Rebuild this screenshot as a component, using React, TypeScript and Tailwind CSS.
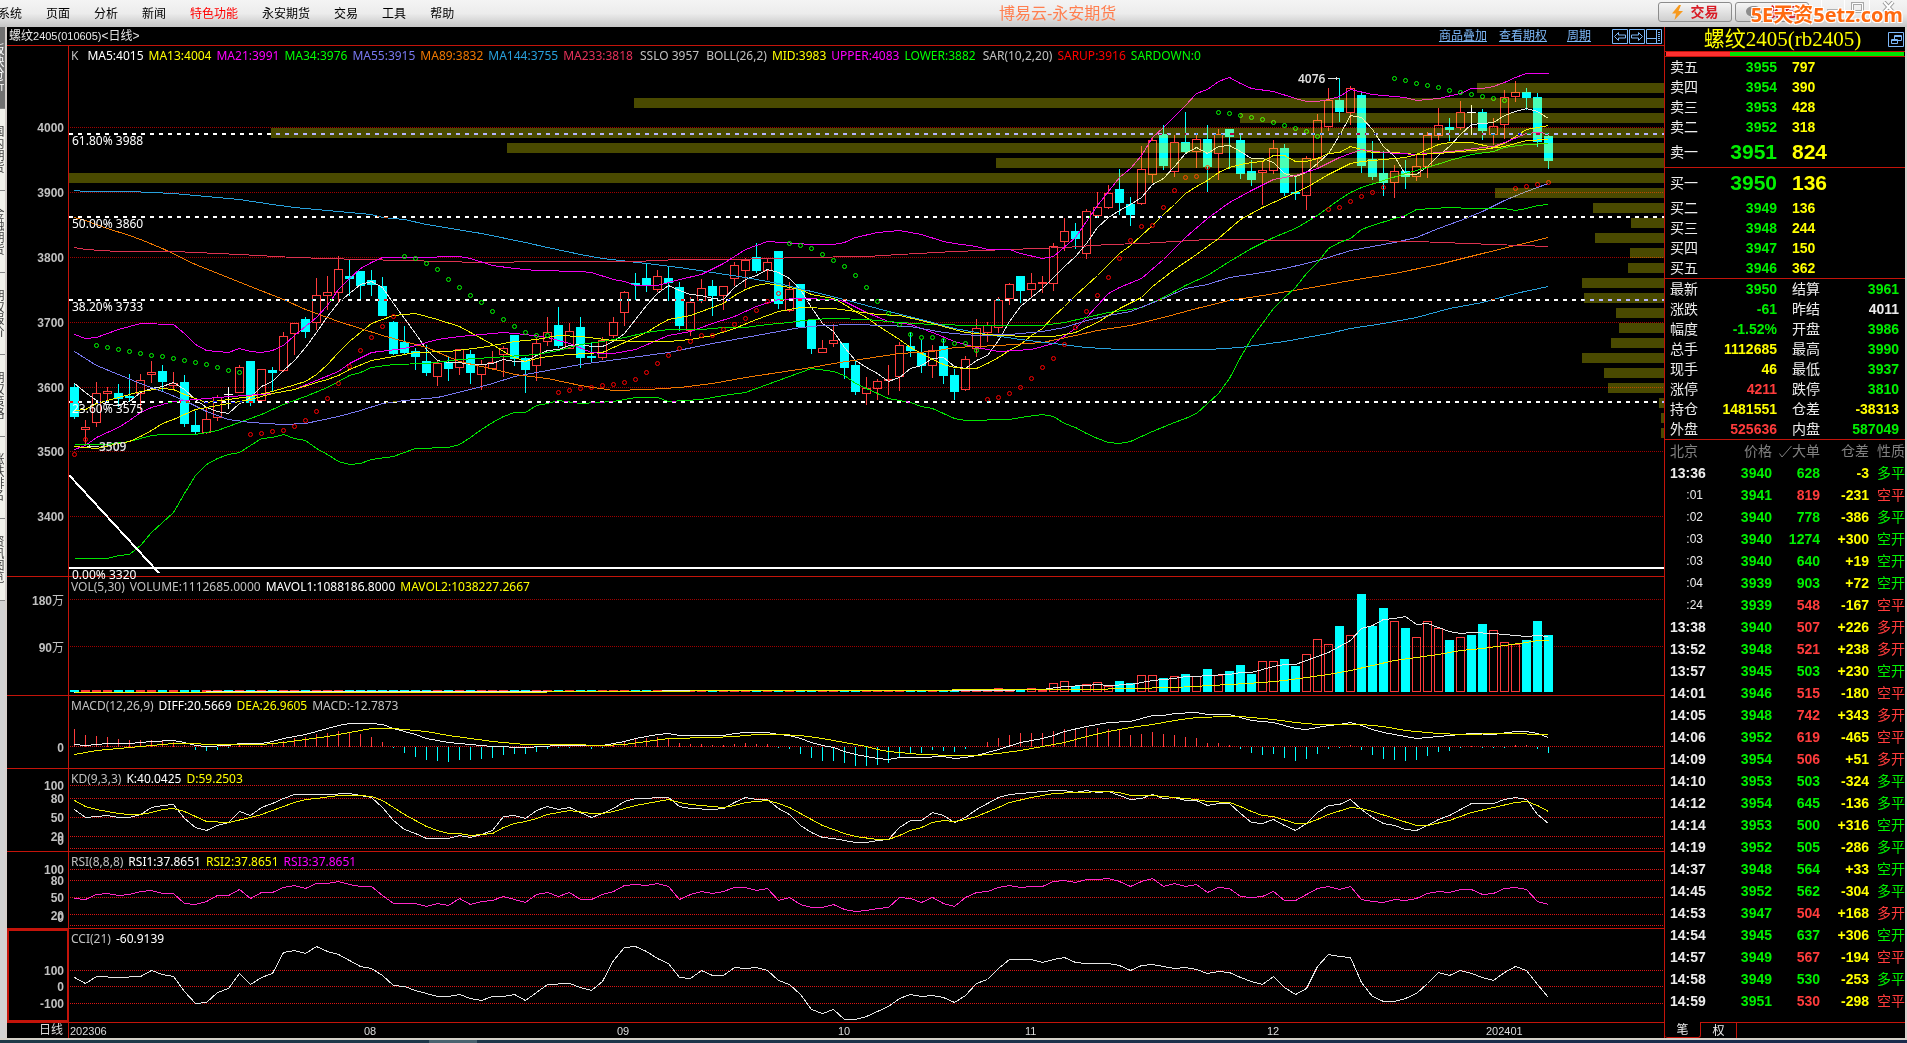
import React from "react";

const CJK = "font-['Liberation_Sans','Noto_Sans_CJK_SC',sans-serif]";
const LABEL = "font-['Noto_Sans','Noto_Sans_CJK_SC',sans-serif]";

const STEP = 11;
const FIRST = 5.5;
const PLOT_WIDTH = 1595;
const RED = "#ff3c3c";
const CYAN = "#00ffff";

const xOf = (i: number) => FIRST + STEP * i;

/* Series are written as "bar:y" pairs, y in chart units. */
const parse = (s: string): [number, number][] =>
  s
    .trim()
    .split(/\s+/)
    .map((p) => p.split(":").map(Number) as [number, number]);

const toPoints = (s: string) =>
  parse(s)
    .map(([i, y]) => `${xOf(i)},${y + 0.5}`)
    .join(" ");

function Line({ data, color, width = 1 }: { data: string; color: string; width?: number }) {
  return <polyline points={toPoints(data)} fill="none" stroke={color} strokeWidth={width} />;
}

/* One candle per entry: kind, high, top, bottom, low. */
const candles = `
d,384,387,417,419 u,420,427,430,446 u,382,393,423,427 u,387,391,394,402 d,384,393,399,407 d,374,396,397,402
u,374,380,394,410 u,361,372,375,383 d,365,371,382,391 u,372,383,386,390 d,375,382,424,427 d,411,425,432,434
u,407,419,433,434 u,395,397,418,421 x,387,394,395,409 u,365,367,393,393 d,361,361,403,406 u,369,369,401,401
d,367,370,373,391 u,332,336,371,372 u,323,323,334,355 d,317,319,332,338 u,278,295,323,330 u,276,292,296,310
u,256,269,293,302 d,260,276,279,296 d,271,271,286,299 d,270,280,285,296 d,277,286,316,316 d,321,322,354,355
d,326,342,353,354 d,348,351,357,370 d,345,361,373,376 u,360,363,377,386 d,356,362,369,381 u,349,349,368,375
d,350,354,373,384 u,360,364,375,390 u,351,362,369,369 u,346,348,355,377 d,335,335,359,366 d,357,358,370,393
u,337,343,366,381 u,317,332,342,346 d,307,325,346,348 u,323,331,349,349 d,317,327,358,368 d,342,356,358,363
u,337,340,358,360 u,317,322,336,338 u,291,292,313,326 d,273,283,285,300 d,263,278,285,292 u,270,276,290,292
d,267,278,283,301 d,282,287,326,331 u,297,302,331,336 u,279,288,301,303 d,280,286,296,316 u,286,286,296,310
u,262,265,279,286 u,258,260,271,288 d,243,257,271,273 u,259,262,271,280 d,251,251,304,309 u,282,289,311,312
d,284,284,327,328 d,319,320,349,354 u,340,348,353,353 u,324,340,344,347 d,343,343,368,379 d,360,365,392,395
u,377,388,394,405 u,379,381,389,400 u,365,379,381,395 u,342,345,377,391 d,332,346,351,357 d,340,353,366,373
u,345,350,366,378 d,339,346,376,384 d,369,375,392,400 u,356,359,390,391 u,319,328,349,357 u,322,325,333,342
u,297,300,328,333 u,283,284,299,305 d,276,276,291,303 u,273,283,290,298 u,276,282,284,293 u,243,246,284,291
u,218,231,242,251 d,223,231,239,249 u,209,211,254,259 u,192,207,216,218 u,185,193,208,209 d,169,189,203,215
d,197,204,215,226 u,146,169,204,205 u,137,140,175,183 d,125,134,166,170 u,135,142,172,177 d,112,142,152,153
u,133,139,152,168 d,125,139,167,192 u,129,134,154,180 d,129,129,137,169 d,135,140,174,179 d,160,171,180,186
u,162,170,173,205 u,140,148,171,174 d,144,148,193,196 d,177,192,194,200 u,156,158,196,210 u,114,120,159,167
u,88,100,127,131 d,78,100,112,122 u,86,88,113,125 d,92,95,166,173 d,141,159,177,180 d,151,173,183,196
u,165,171,183,198 d,160,171,177,189 u,154,166,177,181 u,132,135,167,178 u,108,125,136,140 d,118,127,130,141
u,101,112,128,130 x,105,112,113,135 d,109,112,131,140 u,118,126,135,145 u,90,97,125,139 u,81,92,97,102
d,88,92,98,110 d,93,97,142,147 d,134,136,161,169`
  .trim()
  .split(/\s+/)
  .map((c) => {
    const [kind, ...v] = c.split(",");
    const [high, top, bottom, low] = v.map(Number);
    return { kind, high, top, bottom, low };
  });

const ma5 =
  "0:383 1:392 2:400 3:404 4:405 5:401 6:392 7:388 8:386 9:382 10:389 11:399 12:407 13:411 14:413 15:403 16:397 17:386 18:381 19:370 20:360 21:347 22:332 23:316 24:302 25:293 26:284 27:281 28:287 29:303 30:318 31:333 32:349 33:360 34:362 35:362 36:364 37:364 38:363 39:359 40:361 41:361 42:355 43:350 44:349 45:345 46:344 47:346 48:346 49:341 50:333 51:319 52:305 53:293 54:285 55:290 56:294 57:295 58:298 59:299 60:287 61:279 62:275 63:269 64:272 65:278 66:289 67:307 68:323 69:331 70:347 71:360 72:367 73:373 74:381 75:377 76:368 77:365 78:358 79:357 80:366 81:368 82:360 83:355 84:340 85:321 86:306 87:297 88:288 89:277 90:266 91:256 92:243 93:227 94:217 95:210 96:204 97:197 98:184 99:178 100:166 101:153 102:147 103:153 104:146 105:145 106:151 107:158 108:158 109:162 110:173 111:176 112:172 113:163 114:153 115:135 116:115 117:117 118:129 119:146 120:156 121:174 122:174 123:166 124:155 125:146 126:134 127:124 128:123 129:122 130:115 131:111 132:108 133:111 134:118";
const ma13 =
  "0:410 1:409 2:403 4:397 6:391 8:388 9:389 10:394 12:402 14:399 16:396 18:391 21:381 22:374 23:364 24:352 25:341 26:332 27:323 29:315 31:313 33:319 35:326 36:332 37:338 38:344 39:351 40:357 41:361 42:358 43:356 45:354 48:352 49:347 50:342 52:332 53:325 54:319 56:315 57:311 59:303 60:295 61:289 62:285 63:283 64:285 66:289 67:294 69:298 70:304 71:311 72:317 73:325 74:332 75:339 76:347 78:359 79:364 80:367 81:368 82:368 83:363 84:357 85:350 86:344 87:335 88:328 89:316 90:306 91:295 92:285 93:275 94:264 95:253 96:245 97:235 98:225 99:214 100:204 101:193 102:186 103:180 104:172 105:167 106:164 107:162 108:161 109:155 110:155 111:161 112:161 113:158 114:153 115:152 116:146 117:149 118:152 120:152 122:154 123:149 124:144 125:142 126:142 127:142 129:147 130:143 131:136 132:129 133:127 134:125";
const ma21 =
  "0:449 1:445 2:437 4:427 5:420 6:412 7:407 9:401 13:397 18:393 20:389 22:380 24:371 25:363 27:352 30:348 33:339 35:336 38:333 39:332 41:334 43:337 45:343 47:352 48:353 49:353 51:349 54:335 56:331 58:323 60:316 62:306 64:299 66:298 69:299 70:301 72:312 74:321 76:324 78:332 80:341 82:347 84:351 87:349 89:343 91:328 92:317 94:293 95:287 97:278 99:259 101:237 103:218 105:202 107:190 109:179 111:175 113:168 115:157 117:149 119:152 122:154 126:150 128:147 129:146 130:142 132:133 133:132 134:133";
const ma34 =
  "0:444 3:444 5:441 7:435 8:434 11:434 13:430 15:422 17:414 19:404 21:396 23:387 25:375 26:372 27:367 29:364 32:363 35:359 38:357 42:354 44:350 46:344 48:341 50:337 52:332 54:329 57:329 59:327 61:327 63:324 65:322 67:319 69:318 72:319 75:322 78:324 82:325 88:325 90:322 92:317 94:312 96:309 97:307 99:297 101:285 103:275 105:261 107:248 109:237 111:228 113:215 115:199 116:192 117:187 119:180 121:173 123:167 125:160 127:154 129:151 130:147 132:144 134:143";
const ma55 =
  "0:351 2:365 4:374 6:383 8:391 10:400 12:411 14:419 16:422 19:424 21:423 24:416 26:410 28:403 30:400 33:397 36:389 38:383 40:376 43:370 46:364 50:358 54:352 58:343 62:335 66:327 68:325 71:324 76:326 79:332 82:335 85:334 88:331 90:327 92:320 94:315 96:311 99:298 101:288 103:284 105:277 108:272 110:268 112:263 114:257 116:250 118:246 120:242 122:237 124:228 126:220 128:211 130:200 132:191 134:183";
const ma89 =
  "0:217 1:220 3:228 5:235 6:239 8:248 11:264 16:286 19:299 21:309 24:321 26:328 28:335 30:341 32:347 35:361 37:366 39:371 40:374 43:378 46:385 49:390 52:389 55:387 58:383 61:377 64:372 67:367 69:363 72:358 75:353 78:351 80:347 84:345 88:342 91:335 93:330 96:325 99:317 102:308 105:300 108:295 112:288 116:280 120:273 124:264 128:253 131:245 134:237";
const ma144 =
  "0:190 1:191 5:191 7:192 9:193 12:196 15:199 18:204 20:207 25:212 27:214 28:217 30:219 32:224 37:233 41:242 43:247 46:254 48:258 52:263 55:267 58:272 61:277 64:283 67:291 70:299 74:311 77:319 80:328 83:334 86:339 89:343 92:347 95:349 103:349 106:347 110:341 114:333 116:328 119:323 122:317 125:308 128:302 131:293 134:286";
const ma233 =
  "0:247 1:249 4:251 9:251 15:254 20:257 26:259 30:260 37:262 43:261 51:261 55:259 60:259 66:257 72:256 75:254 80:251 85:249 90:247 94:244 97:243 103:239 113:240 117:240 122:241 129:244 134:246";
const bollMid =
  "0:446 2:448 4:443 5:441 6:436 7:430 8:423 9:419 10:414 11:409 12:407 14:403 16:399 18:393 20:389 22:382 23:379 24:375 25:369 27:360 29:356 31:352 34:351 37:347 38:345 40:341 42:339 43:337 44:335 46:336 49:340 51:341 54:341 56:339 58:335 60:328 62:319 64:311 66:307 69:308 71:311 73:314 75:315 77:320 79:326 81:332 84:335 87:336 89:336 91:332 93:322 95:308 97:297 98:286 100:269 102:254 104:238 106:219 108:207 110:197 112:187 114:174 116:163 117:161 119:159 121:157 122:154 124:153 126:151 128:149 130:146 132:140 134:139";
const bollUpper =
  "0:334 1:338 2:337 4:329 6:323 9:324 10:333 11:344 12:350 14:352 15:348 16:351 17:352 18:350 19:345 20:335 21:326 22:317 23:305 24:289 25:278 26:268 27:262 28:257 32:257 34:256 35:256 36:258 38:265 40:268 42:270 46:271 47:272 49:279 50:281 51:285 53:285 55:279 57:274 59:263 61:249 63:241 67:244 69:244 70:242 71:237 73:232 75:230 77:234 79:241 80:243 82:246 83:249 85:249 86:253 88:258 89:256 91:237 92:221 93:205 94:191 95:177 96:168 97:155 98:137 99:127 101:105 102:93 103:89 104:81 105:77 106:83 107:88 109:91 111:98 112:101 113:101 114:99 115:96 116:89 118:94 121:97 122:100 124:98 126:93 127:88 128:88 129:86 130:82 131:77 132:73 134:73";
const bollLower =
  "0:558 3:558 4:555 5:554 6:545 7:532 8:522 9:512 10:493 11:475 12:464 13:458 14:454 15:452 16:445 17:438 18:437 19:434 20:438 21:440 22:448 23:454 24:461 25:464 26:463 27:459 29:456 31:448 34:447 35:444 36:437 37:429 38:422 39:416 40:412 41:412 42:405 43:403 44:400 46:403 49:401 51:397 53:397 54:401 57:399 59:395 61:392 63:384 65:376 67:368 69:371 70:375 71:383 73:393 74:398 76:402 77:406 78:408 79:413 80:418 81:420 85:419 86:417 88:414 89:416 90:423 91:427 92:433 93:438 94:442 95:443 96:441 98:431 100:422 101:418 102:413 103:403 104:393 105:378 106:357 107:338 108:323 109:308 110:297 111:287 112:273 113:262 114:248 115:242 116:238 117:229 118:225 120:218 121:215 122:209 125:207 127:208 130:208 131:210 132:208 133:205 134:204";

const sarDown =
  "2:345 3:347 4:349 5:351 6:353 7:355 8:356 9:358 10:360 11:362 12:364 13:367 14:370 15:372 30:256 31:258 32:263 33:269 34:279 35:287 36:295 37:302 38:311 39:319 40:326 41:332 42:335 43:335 65:243 66:245 67:248 68:254 69:260 70:266 71:275 72:287 73:301 74:313 75:324 76:334 77:337 78:337 79:340 80:343 81:343 82:350 104:112 105:113 106:115 107:117 108:119 109:122 110:125 111:128 112:131 113:136 120:78 121:80 122:83 123:85 124:87 125:90 126:92 127:94 128:96 129:98 130:100";
const sarUp =
  "0:454 1:439 16:434 17:433 18:431 19:430 20:426 21:420 22:411 23:398 24:383 25:366 26:350 27:337 28:326 29:316 44:392 45:390 46:388 47:387 48:385 49:384 50:382 51:379 52:372 53:363 54:355 55:348 56:341 57:335 58:335 59:329 60:324 61:318 62:310 63:301 64:293 83:399 84:397 85:393 86:387 87:378 88:367 89:358 90:344 91:327 92:311 93:295 94:277 95:258 96:240 97:226 98:225 99:207 100:190 101:177 102:176 103:167 114:209 115:207 116:201 117:196 118:192 119:187 131:188 132:186 133:184 134:182";

/* Price distribution: left edge of each bar, top to bottom. */
const profile = [
  1408, 565, 1171, 202, 438, 927, 0, 1426, 1524, 1562, 1526, 1561, 1559, 1513, 1515, 1547, 1550,
  1542, 1513, 1535, 1539, 1590, 1592, 1592,
];

const volumeTail = [
  4, 2, 2, 4, 2, 9, 11, 6, 8, 10, 6, 11, 9, 17, 17, 14, 16, 18, 16, 23, 17, 21, 27, 18, 31, 31, 33,
  26, 38, 53, 48, 66, 57, 98, 66, 84, 71, 64, 55, 71, 64, 52, 55, 57, 68, 62, 50, 48, 52, 71, 57,
];
const mavol1 =
  "0:692 24:691 83:690 88:689 90:686 92:685 93:684 94:685 96:684 97:682 98:680 99:679 100:678 101:676 102:676 103:675 105:674 106:672 107:672 108:669 109:666 110:664 111:664 112:660 113:656 114:652 115:646 116:640 117:628 118:625 119:619 120:618 121:616 122:624 123:623 124:627 125:631 126:633 127:632 129:633 131:635 132:636 133:635 134:636";
const mavol2 =
  "0:692 42:692 44:691 92:689 96:688 100:687 105:684 108:682 110:680 112:677 114:674 116:670 118:665 120:660 122:657 124:654 126:650 128:648 130:645 132:642 133:640 134:640";

const macdBars = [
  728, 734, 735, 736, 738, 739, 739, 739, 740, 741, 744, 749, 750, 749, 747, 744, 745, 745, 743, 740,
  737, 736, 733, 732, 730, 731, 733, 736, 741, 747, 752, 756, 759, 760, 761, 759, 759, 758, 757, 754,
  753, 753, 751, 748, 747, 747, 745, 748, 747, 743, 741, 738, 737, 736, 738, 742, 743, 743, 744, 744,
  743, 742, 743, 743, 747, 748, 753, 757, 760, 760, 762, 765, 765, 764, 762, 757, 753, 752, 749, 750,
  751, 748, 745, 741, 737, 734, 732, 732, 732, 730, 728, 728, 727, 727, 728, 729, 734, 733, 731, 733,
  734, 736, 737, 742, 742, 744, 748, 752, 754, 753, 757, 760, 758, 753, 748, 747, 744, 749, 754, 758,
  759, 760, 759, 755, 751, 750, 747, 745, 747, 747, 747, 744, 744, 748, 752,
];
const diff =
  "0:744 1:745 3:743 5:743 7:741 9:740 10:742 11:745 12:746 14:745 15:743 17:743 18:741 19:738 21:734 23:728 24:725 25:723 27:723 28:724 29:728 30:731 31:734 32:738 33:740 34:742 36:744 38:746 41:747 44:745 48:745 50:741 51:738 53:734 54:733 55:735 59:735 60:733 61:732 63:732 64:734 65:735 66:738 67:742 68:745 69:747 70:751 71:754 73:758 74:759 75:757 77:757 79:756 80:758 81:757 82:755 84:749 86:742 88:738 89:735 90:731 92:726 94:722 96:721 98:715 99:715 100:713 102:712 103:714 105:714 106:717 107:720 109:722 111:728 112:729 114:725 115:724 116:722 117:725 118:729 119:732 121:736 122:738 124:736 127:733 129:734 131:731 132:731 133:733 134:737";
const dea =
  "0:754 2:750 5:747 7:745 9:743 11:743 12:744 17:744 19:742 21:739 23:736 25:732 27:728 29:728 31:730 32:731 34:735 36:738 38:741 41:744 45:744 48:745 50:744 52:741 54:738 58:737 60:736 62:734 64:734 66:735 68:738 70:742 72:746 73:749 74:751 77:754 80:755 82:755 84:753 86:750 88:746 90:742 92:736 94:731 96:727 98:724 100:720 102:717 105:716 106:716 109:719 111:722 113:724 117:724 119:726 121:730 124:733 126:734 130:733 134:734";

const kLine =
  "0:809 1:817 3:815 4:817 5:817 6:814 7:807 8:805 9:804 10:818 11:827 12:830 13:825 14:822 15:811 16:815 17:807 18:803 19:798 20:794 23:794 25:793 27:797 28:807 29:820 30:829 31:833 32:838 34:838 35:835 36:837 37:834 38:830 39:816 40:815 41:818 42:810 43:806 44:809 45:807 46:812 47:817 48:813 49:808 50:801 51:798 52:798 53:797 54:797 55:806 56:808 58:809 59:808 60:802 61:797 62:799 63:799 64:808 65:814 66:825 67:832 68:837 69:838 71:842 72:842 73:840 74:839 75:827 76:820 77:820 78:812 79:815 80:822 81:817 82:809 83:803 84:797 85:794 87:792 89:790 90:790 91:792 92:790 93:792 94:791 95:795 96:799 97:798 98:794 99:798 100:797 101:800 102:800 103:805 104:803 105:803 106:813 107:822 108:823 109:819 110:825 111:830 112:823 113:812 114:805 115:804 116:799 117:809 118:817 119:823 120:825 121:829 122:830 123:825 124:819 125:815 126:809 127:803 129:803 130:799 131:797 132:799 133:814 134:823";
const dLine =
  "0:800 1:806 2:809 4:813 5:814 6:814 7:812 8:809 9:808 10:811 12:821 14:822 16:817 17:814 19:806 20:802 21:799 22:798 24:795 26:795 27:796 28:800 29:807 30:814 32:826 33:830 34:833 35:833 36:835 38:833 39:827 40:823 41:821 42:818 43:814 45:810 47:813 48:813 49:811 50:808 51:805 53:801 54:799 55:802 56:804 59:807 60:805 61:802 63:800 64:803 65:807 67:819 68:825 70:833 71:836 73:839 74:839 75:835 76:830 77:827 78:822 79:820 80:821 81:819 82:816 84:807 85:802 87:797 89:793 91:792 94:791 95:792 96:795 98:795 100:797 102:799 103:801 105:802 106:806 107:811 108:815 109:816 111:823 112:823 113:819 114:814 116:807 117:808 118:811 120:818 122:825 123:825 125:820 127:812 129:807 131:802 132:801 133:805 134:811";
const rsi =
  "0:898 1:899 2:894 3:893 4:895 5:894 6:891 7:890 8:893 9:893 10:903 11:904 12:901 13:895 14:895 15:889 16:898 17:892 18:892 19:887 20:885 21:888 22:883 23:883 24:881 25:884 26:886 27:886 28:895 29:903 31:903 32:906 33:903 34:905 35:898 36:904 37:901 38:900 39:896 40:899 41:902 42:894 43:892 44:896 45:892 46:899 47:899 48:894 49:891 50:885 51:884 52:885 53:883 54:886 55:899 56:894 57:891 58:893 59:891 60:887 61:887 62:890 63:888 64:900 65:897 66:904 67:907 68:907 69:904 70:909 71:911 72:910 73:908 74:907 75:897 76:898 77:902 78:897 79:903 80:906 81:897 82:892 83:891 84:887 85:885 86:887 87:886 88:886 89:881 90:880 91:882 92:879 93:879 94:878 95:881 96:886 97:881 98:878 99:886 100:883 101:886 102:884 103:892 104:887 105:888 106:896 107:897 108:896 109:891 110:900 111:900 112:894 113:888 114:886 115:889 116:886 117:899 118:901 119:902 120:899 121:900 122:898 123:893 124:891 125:892 126:889 127:889 128:894 129:893 130:888 131:887 132:889 133:901 134:904";
const cci =
  "0:977 1:983 2:976 4:977 6:976 7:970 8:974 9:976 10:991 11:1003 12:1002 13:992 14:988 15:973 16:984 17:977 18:973 19:952 20:950 21:953 22:946 23:951 24:954 25:960 26:966 27:968 28:975 29:985 30:986 31:990 33:996 34:996 35:994 36:998 37:1000 38:996 39:996 40:994 41:1000 42:992 43:984 45:983 46:987 47:990 48:981 49:960 50:947 51:946 52:951 53:958 54:963 55:977 56:978 57:970 58:975 59:975 60:967 61:968 62:967 63:970 64:980 65:984 66:994 67:1009 68:1013 69:1009 70:1019 71:1019 72:1016 73:1011 74:1006 75:998 76:994 77:996 78:995 79:997 80:1002 81:995 82:983 83:979 84:968 85:959 87:959 88:962 89:959 90:957 91:962 92:963 94:963 95:965 96:970 97:965 98:964 100:968 101:967 102:969 103:973 104:971 105:972 106:977 107:981 108:984 109:976 110:987 111:994 112:988 113:966 114:954 115:956 116:957 117:982 118:996 119:1001 120:1001 121:998 122:993 123:983 124:972 125:975 126:970 127:973 128:977 129:980 130:972 131:966 132:970 133:984 134:997";

function Grid({ rows, color }: { rows: number[]; color: string }) {
  return (
    <g stroke={color} strokeDasharray="1 1">
      {rows.map((y) => (
        <line key={y} x1={1} x2={PLOT_WIDTH} y1={y + 0.5} y2={y + 0.5} />
      ))}
    </g>
  );
}

type Tag = { text: string; color: string; lead?: string };

function Panel({
  name,
  top,
  height,
  className,
  tags,
  ticks,
  active,
  children,
}: {
  name: string;
  top: number;
  height: number;
  className: string;
  tags: Tag[];
  ticks: [string, number][];
  active?: boolean;
  children: React.ReactNode;
}) {
  return (
    <section aria-label={name} className={`flex border-b border-[#c4140a] ${className}`}>
      <div
        className={`w-[62px] shrink-0 ${
          active ? "shadow-[inset_0_0_0_2px_#c4140a]" : "border-r border-[#c4140a]"
        }`}
      >
        <svg className="h-full w-[61px]" viewBox={`0 ${top} 61 ${height}`} preserveAspectRatio="none">
          <g
            className="font-['Liberation_Sans','Noto_Sans_CJK_SC',sans-serif] text-[12px] font-bold"
            fill="#c0c0c0"
            textAnchor="end"
          >
            {ticks.map(([t, y]) => (
              <text key={t} x={57} y={y + 5}>
                {t.replace("万", "")}
                {t.endsWith("万") && <tspan fontWeight={400}>万</tspan>}
              </text>
            ))}
          </g>
        </svg>
      </div>
      <div className="relative min-w-0 flex-1">
        <svg
          className="absolute inset-0 h-full w-full"
          viewBox={`0 ${top} ${PLOT_WIDTH} ${height}`}
          preserveAspectRatio="none"
          shapeRendering="crispEdges"
        >
          {children}
        </svg>
        <div
          className={`absolute top-0 left-[2px] flex h-5 items-center gap-[5px] text-[12px] whitespace-nowrap ${LABEL}`}
        >
          {tags.map((t) => (
            <span key={t.text} className={t.lead} style={{ color: t.color }}>
              {t.text}
            </span>
          ))}
        </div>
      </div>
    </section>
  );
}

const fibs: [string, string][] = [
  ["61.80% 3988", "top-[87px]"],
  ["50.00% 3860", "top-[170px]"],
  ["38.20% 3733", "top-[253px]"],
  ["23.60% 3575", "top-[355px]"],
  ["0.00% 3320", "top-[521px]"],
];

function PriceChart() {
  return (
    <div className="relative flex flex-1 flex-col">
      <Panel
        name="K线"
        top={46}
        height={530}
        className="flex-1"
        tags={[
          { text: "K", color: "#c0c0c0", lead: "mr-1" },
          { text: "MA5:4015", color: "#ffffff" },
          { text: "MA13:4004", color: "#ffff00" },
          { text: "MA21:3991", color: "#ff00ff" },
          { text: "MA34:3976", color: "#00ff00" },
          { text: "MA55:3915", color: "#7878f0" },
          { text: "MA89:3832", color: "#f07800" },
          { text: "MA144:3755", color: "#28a0dc" },
          { text: "MA233:3818", color: "#e6325a" },
          { text: "SSLO 3957", color: "#c0c0c0", lead: "ml-[2px]" },
          { text: "BOLL(26,2)", color: "#c0c0c0", lead: "ml-[2px]" },
          { text: "MID:3983", color: "#ffff00" },
          { text: "UPPER:4083", color: "#ff00ff" },
          { text: "LOWER:3882", color: "#00ff00" },
          { text: "SAR(10,2,20)", color: "#c0c0c0", lead: "ml-[2px]" },
          { text: "SARUP:3916", color: "#ff0000" },
          { text: "SARDOWN:0", color: "#00ff00" },
        ]}
        ticks={[
          ["4000", 127],
          ["3900", 192],
          ["3800", 257],
          ["3700", 322],
          ["3600", 387],
          ["3500", 451],
          ["3400", 516],
        ]}
      >
        <Grid rows={[127, 192, 257, 322, 387, 451, 516]} color="#a00000" />
        {candles.map((c, i) => {
          const x = xOf(i);
          if (c.kind === "x") {
            return (
              <path key={i} d={`M${x - 4.5} ${c.top + 0.5}h9M${x} ${c.high}V${c.low}`} stroke="#ffffff" />
            );
          }
          if (c.kind === "d") {
            return (
              <g key={i}>
                <path d={`M${x} ${c.high}V${c.low}`} stroke={CYAN} />
                <rect x={x - 4.5} y={c.top} width={9} height={Math.max(2, c.bottom - c.top)} fill={CYAN} />
              </g>
            );
          }
          return (
            <g key={i} stroke={RED} fill="none">
              <path d={`M${x} ${c.high}V${c.top}M${x} ${c.bottom}V${c.low}`} />
              <rect x={x - 4} y={c.top + 0.5} width={8} height={Math.max(1, c.bottom - c.top - 1)} />
            </g>
          );
        })}
        <Line data={ma5} color="#e6e6e6" />
        <Line data={ma13} color="#f0f000" />
        <Line data={ma21} color="#f000f0" />
        <Line data={ma34} color="#00e600" />
        <Line data={ma55} color="#7878f0" />
        <Line data={ma89} color="#f07800" />
        <Line data={ma144} color="#28a0dc" />
        <Line data={ma233} color="#dc3250" />
        <Line data={bollMid} color="#f0f000" />
        <Line data={bollUpper} color="#f000f0" />
        <Line data={bollLower} color="#00e600" />
        <g fill="none" shapeRendering="geometricPrecision">
          {parse(sarDown).map(([i, y]) => (
            <ellipse key={i} cx={xOf(i)} cy={y + 0.5} rx={2} ry={2} stroke="#00ff00" />
          ))}
          {parse(sarUp).map(([i, y]) => (
            <ellipse key={i} cx={xOf(i)} cy={y + 0.5} rx={2} ry={2} stroke="#ff0000" />
          ))}
        </g>
        <g fill="#ffff00" fillOpacity={0.29}>
          {profile.map((x, n) => (
            <rect key={n} x={x} y={83 + n * 15} width={PLOT_WIDTH - x} height={10} />
          ))}
        </g>
        <g stroke="#ffffff" strokeWidth={2} strokeDasharray="4 5" className="mix-blend-difference">
          {[134, 217, 300, 402].map((y) => (
            <line key={y} x1={0} x2={PLOT_WIDTH} y1={y} y2={y} />
          ))}
        </g>
        <line x1={0} x2={PLOT_WIDTH} y1={568} y2={568} stroke="#ffffff" strokeWidth={2} />
        <line x1={0} x2={90} y1={475} y2={573} stroke="#ffffff" strokeWidth={2} />
        <g stroke="#dddddd" fill="none">
          <path d="M18 446.5h12M20.500 445v3" />
          <path d="M1259 78.500h11M1267.500 77v3" />
        </g>
      </Panel>
      <div className={`pointer-events-none absolute inset-0 left-[65px] text-[12px] text-white ${LABEL}`}>
        {fibs.map(([t, pos]) => (
          <span key={t} className={`absolute left-0 leading-4 ${pos}`}>
            {t}
          </span>
        ))}
        <span className="absolute top-[393px] left-[27px] leading-4 font-semibold text-[#dddddd]">3509</span>
        <span className="absolute top-[25px] left-[1226px] leading-4 font-semibold text-[#dddddd]">4076</span>
      </div>
    </div>
  );
}

function IndicatorPanels() {
  return (
    <>
      <Panel
        name="成交量"
        top={577}
        height={118}
        className="h-[119px]"
        tags={[
          { text: "VOL(5,30)", color: "#c0c0c0" },
          { text: "VOLUME:1112685.0000", color: "#c0c0c0" },
          { text: "MAVOL1:1088186.8000", color: "#ffffff" },
          { text: "MAVOL2:1038227.2667", color: "#ffff00" },
        ]}
        ticks={[
          ["180万", 600],
          ["90万", 647],
        ]}
      >
        <Grid rows={[599, 646]} color="#a00000" />
        {candles.map((c, i) => {
          const h = i < 84 ? 2 : volumeTail[i - 84];
          return c.kind === "u" ? (
            <rect
              key={i}
              x={xOf(i) - 4}
              y={692 - h + 0.5}
              width={8}
              height={Math.max(1, h - 1)}
              fill="none"
              stroke={RED}
            />
          ) : (
            <rect key={i} x={xOf(i) - 4.5} y={692 - h} width={9} height={h} fill={CYAN} />
          );
        })}
        <Line data={mavol1} color="#e6e6e6" />
        <Line data={mavol2} color="#f0f000" />
      </Panel>
      <Panel
        name="MACD"
        top={696}
        height={72}
        className="h-[73px]"
        tags={[
          { text: "MACD(12,26,9)", color: "#c0c0c0" },
          { text: "DIFF:20.5669", color: "#ffffff" },
          { text: "DEA:26.9605", color: "#ffff00" },
          { text: "MACD:-12.7873", color: "#c0c0c0" },
        ]}
        ticks={[["0", 747]]}
      >
        <Grid rows={[746]} color="#dc1414" />
        {macdBars.map((y, i) => (
          <path key={i} d={`M${xOf(i)} 746.5V${y + 0.5}`} stroke={y > 746 ? CYAN : RED} />
        ))}
        <Line data={diff} color="#f0f0f0" />
        <Line data={dea} color="#f0f000" />
      </Panel>
      <Panel
        name="KD"
        top={769}
        height={82}
        className="h-[83px]"
        tags={[
          { text: "KD(9,3,3)", color: "#c0c0c0" },
          { text: "K:40.0425", color: "#ffffff" },
          { text: "D:59.2503", color: "#ffff00" },
        ]}
        ticks={[
          ["100", 785],
          ["80", 798],
          ["50", 817],
          ["20", 836],
          ["0", 840],
        ]}
      >
        <Grid rows={[785, 798, 817, 836, 848]} color="#dc1414" />
        <Line data={kLine} color="#e6e6e6" />
        <Line data={dLine} color="#f0f000" />
      </Panel>
      <Panel
        name="RSI"
        top={852}
        height={76}
        className="h-[77px]"
        tags={[
          { text: "RSI(8,8,8)", color: "#c0c0c0" },
          { text: "RSI1:37.8651", color: "#ffffff" },
          { text: "RSI2:37.8651", color: "#ffff00" },
          { text: "RSI3:37.8651", color: "#ff00ff" },
        ]}
        ticks={[
          ["100", 869],
          ["80", 880],
          ["50", 897],
          ["20", 915],
          ["0", 917],
        ]}
      >
        <Grid rows={[869, 880, 897, 914, 925]} color="#dc1414" />
        <Line data={rsi} color="#ff28c8" />
      </Panel>
      <Panel
        name="CCI"
        top={929}
        height={93}
        className="h-[94px]"
        active
        tags={[
          { text: "CCI(21)", color: "#c0c0c0" },
          { text: "-60.9139", color: "#ffffff" },
        ]}
        ticks={[
          ["100", 970],
          ["0", 986],
          ["-100", 1003],
        ]}
      >
        <Grid rows={[970, 986, 1003]} color="#dc1414" />
        <Line data={cci} color="#e6e6e6" />
      </Panel>
      <div className={`flex h-[15px] text-[12px] text-[#dddddd] ${CJK}`}>
        <div className="w-[62px] shrink-0 border-r border-[#c4140a] pr-[5px] text-right leading-[15px]">日线</div>
        <svg className="h-[15px] min-w-0 flex-1" viewBox={`0 0 ${PLOT_WIDTH} 15`} preserveAspectRatio="none">
          <g fill="#dddddd" className="text-[11px]">
            <text x={1} y={12}>202306</text>
            <text x={295} y={12}>08</text>
            <text x={548} y={12}>09</text>
            <text x={769} y={12}>10</text>
            <text x={956} y={12}>11</text>
            <text x={1198} y={12}>12</text>
            <text x={1417} y={12}>202401</text>
          </g>
        </svg>
      </div>
    </>
  );
}

function MenuBar() {
  const items = ["系统", "页面", "分析", "新闻", "特色功能", "永安期货", "交易", "工具", "帮助"];
  return (
    <header
      className={`relative flex h-[27px] shrink-0 items-center justify-between bg-linear-to-b from-[#f4f4f4] via-[#ececec] to-[#c6c6c6] ${CJK}`}
    >
      <nav className="-ml-[2px] flex gap-6 text-[12px] text-black">
        {items.map((t) => (
          <button key={t} className={t === "特色功能" ? "text-[#ff0000]" : ""}>
            {t}
          </button>
        ))}
      </nav>
      <h1 className="absolute left-[999px] text-[16px] leading-6 text-[#ff7f50]">博易云-永安期货</h1>
      <div className="flex h-full items-start">
        <button className="mt-[2px] flex h-5 w-[74px] items-center justify-center gap-2 rounded-[3px] border border-[#8c8c8c] bg-linear-to-b from-[#f6f6f6] to-[#cfcfcf] text-[14px] font-bold text-[#d81e28]">
          <svg width="11" height="15" viewBox="0 0 11 15">
            <path d="M7 0 0 8.500h4L2.500 15 11 6H6.500L9 0z" fill="#f79a1e" />
          </svg>
          交易
        </button>
        <button className="mt-[2px] ml-[3px] flex h-5 w-[74px] items-center justify-center gap-2 rounded-[3px] border border-[#8c8c8c] bg-linear-to-b from-[#f6f6f6] to-[#cfcfcf] text-[14px] font-bold text-[#d81e28]">
          <svg width="16" height="13" viewBox="0 0 16 13">
            <path d="M8 0c5 0 8 2.500 8 5.500S12.500 11 8.500 11L5 13V10.500C2 10 0 8 0 5.500 0 2.500 3 0 8 0z" fill="#8d8d8d" />
          </svg>
          论坛
        </button>
        <div className="ml-3 flex h-[18px] border-l border-white">
          <button aria-label="最小化" className="flex w-[23px] items-center justify-center border-r border-white">
            <svg width="13" height="12" viewBox="0 0 13 12">
              <rect x=".5" y="6.500" width="12" height="3" fill="#fff" stroke="#b0b0b0" />
            </svg>
          </button>
          <button aria-label="最大化" className="flex w-[25px] items-start justify-center border-r border-white pt-[2px]">
            <svg width="13" height="11" viewBox="0 0 13 11" fill="none">
              <path d="M1.500 1.500h10v8h-10z" stroke="#a8a8a8" strokeWidth="3" />
              <path d="M1.500 1.500h10v8h-10z" stroke="#fff" />
            </svg>
          </button>
          <button aria-label="关闭" className="flex w-[37px] items-start justify-center pt-[1px]">
            <svg width="13" height="12" viewBox="0 0 13 12">
              <path d="M2 1 11 11M11 1 2 11" stroke="#999" strokeWidth="4" />
              <path d="M2 1 11 11M11 1 2 11" stroke="#fff" strokeWidth="2" />
            </svg>
          </button>
        </div>
      </div>
      <div className="pointer-events-none absolute top-[3px] right-1 font-['Open_Sans','Noto_Sans_CJK_SC',sans-serif] text-[20px] leading-6 font-bold whitespace-nowrap text-[#ff6a10] [text-shadow:1px_1px_0_#fff,-1px_-1px_0_#fff,1px_-1px_0_#fff,-1px_1px_0_#fff]">
        5E天资5etz.com
      </div>
    </header>
  );
}

const sideTabs = ["板块分析", "国内期货", "金融期货", "期权报价", "期权策略", "涨跌排名", "资讯图览"];

function SideTabs() {
  return (
    <aside className="flex w-[7px] shrink-0 flex-col overflow-hidden border-r-2 border-[#d6d0cc] bg-[#d2d2d2]">
      {sideTabs.map((t, i) => (
        <button
          key={t}
          className={`relative flex h-[82px] w-[5px] shrink-0 items-center justify-center overflow-hidden border-b border-[#888] text-[12px] leading-3 ${CJK} ${
            i === 0 ? "bg-[#707070] text-white" : "bg-[#f2f2ec] text-[#404040]"
          }`}
        >
          <span className="-ml-2 w-3 shrink-0 break-all whitespace-normal">{t}</span>
        </button>
      ))}
    </aside>
  );
}

function ChartHeader() {
  return (
    <div className={`flex h-[19px] shrink-0 items-center justify-between border-b border-[#c4140a] pl-[2px] text-[12px] ${CJK}`}>
      <span className="text-[#e8e8e8]">
        螺纹<span className="text-[11px]">2405(010605)</span>&lt;日线&gt;
      </span>
      <div className="flex items-center text-[#7db8f8]">
        <a href="#overlay" className="mr-3 underline">商品叠加</a>
        <a href="#options" className="mr-5 underline">查看期权</a>
        <a href="#period" className="mr-[21px] underline">周期</a>
        <div className="flex gap-px">
          <button aria-label="向左">
            <svg width="16" height="15" viewBox="0 0 16 15" fill="none" stroke="#7db8f8">
              <path d="M.5.500h15v14H.5zM2.500 7.500l4-4v2.500h7v3h-7v2.500z" />
            </svg>
          </button>
          <button aria-label="向右">
            <svg width="16" height="15" viewBox="0 0 16 15" fill="none" stroke="#7db8f8">
              <path d="M.5.500h15v14H.5zM13.500 7.500l-4-4v2.500h-7v3h7v2.500z" />
            </svg>
          </button>
          <button aria-label="分栏" className="mr-[2px]">
            <svg width="16" height="15" viewBox="0 0 16 15" fill="none" stroke="#7db8f8">
              <path d="M.5.500h15v14H.5zM10.500.500v14M.5 9.500h10M12 3.500h2M12 5.500h2M12 7.500h2M12 9.500h2M12 11.500h2" />
            </svg>
          </button>
        </div>
      </div>
    </div>
  );
}

const G = "text-[#00f000]";
const Y = "text-[#ffff00]";
const R = "text-[#ff3c3c]";
const W = "text-[#ececec]";

function Book({ rows, bigFirst }: { rows: [string, string, string][]; bigFirst: boolean }) {
  const bigIndex = bigFirst ? 0 : rows.length - 1;
  return (
    <table className="w-full table-fixed">
      <colgroup>
        <col className="w-[45px]" />
        <col className="w-[67px]" />
        <col />
      </colgroup>
      <tbody>
        {rows.map(([name, price, qty], i) => (
          <tr
            key={name}
            className={i === bigIndex ? "h-[30px] text-[21px] leading-6" : "h-5 text-[14px] leading-4"}
          >
            <th scope="row" className="p-0 pl-[5px] text-left text-[14px] leading-4 font-normal text-[#ececec]">
              {name}
            </th>
            <td className="p-0 text-right font-bold text-[#00f000]">{price}</td>
            <td className="p-0 pl-[15px] font-bold text-[#ffff00]">{qty}</td>
          </tr>
        ))}
      </tbody>
    </table>
  );
}

const stats: [string, string, string, string, string, string][] = [
  ["最新", "3950", G, "结算", "3961", G],
  ["涨跌", "-61", G, "昨结", "4011", W],
  ["幅度", "-1.52%", G, "开盘", "3986", G],
  ["总手", "1112685", Y, "最高", "3990", G],
  ["现手", "46", Y, "最低", "3937", G],
  ["涨停", "4211", R, "跌停", "3810", G],
  ["持仓", "1481551", Y, "仓差", "-38313", Y],
  ["外盘", "525636", R, "内盘", "587049", G],
];

const trades = `13:36 3940 628 -3 多平 g
:01 3941 819 -231 空平 r
:02 3940 778 -386 多平 g
:03 3940 1274 +300 空开 g
:03 3940 640 +19 空开 g
:04 3939 903 +72 空开 g
:24 3939 548 -167 空平 r
13:38 3940 507 +226 多开 r
13:52 3948 521 +238 多开 r
13:57 3945 503 +230 空开 g
14:01 3946 515 -180 空平 r
14:05 3948 742 +343 多开 r
14:06 3952 619 -465 空平 r
14:09 3954 506 +51 多开 r
14:10 3953 503 -324 多平 g
14:12 3954 645 -136 多平 g
14:14 3953 500 +316 空开 g
14:19 3952 505 -286 多平 g
14:37 3948 564 +33 空开 g
14:45 3952 562 -304 多平 g
14:53 3947 504 +168 多开 r
14:54 3945 637 +306 空开 g
14:57 3949 567 -194 空平 r
14:58 3949 530 -253 多平 g
14:59 3951 530 -298 空平 r`
  .split("\n")
  .map((l) => l.split(" "));

function QuotePanel() {
  return (
    <aside className={`flex w-[241px] shrink-0 flex-col border-l border-[#c4140a] text-[14px] leading-4 ${CJK}`}>
      <div className="flex h-6 items-center">
        <h2 className="flex-1 pl-[12px] text-center font-['Liberation_Serif','Noto_Sans_CJK_SC',serif] text-[21px] leading-6 whitespace-nowrap text-[#ffff00]">
          螺纹2405(rb2405)
        </h2>
        <button aria-label="还原" className="mr-px">
          <svg width="16" height="15" viewBox="0 0 16 15" fill="none" stroke="#7db8f8">
            <path d="M.5.500h15v14H.5zM6.500 7V3.500h7v5H10M3.500 7.500h6v4h-6zM6.500 4.500h7M3.500 8.500h6" />
          </svg>
        </button>
      </div>
      <div className="flex h-[6px] border-y border-[#c4140a] px-px">
        <div className="w-[64px] bg-[#ff3030]" />
        <div className="flex-1 bg-[#00e600]" />
      </div>
      <div className="border-b border-[#c4140a]">
        <Book
          bigFirst={false}
          rows={[
            ["卖五", "3955", "797"],
            ["卖四", "3954", "390"],
            ["卖三", "3953", "428"],
            ["卖二", "3952", "318"],
            ["卖一", "3951", "824"],
          ]}
        />
      </div>
      <div className="border-b border-[#c4140a]">
        <Book
          bigFirst
          rows={[
            ["买一", "3950", "136"],
            ["买二", "3949", "136"],
            ["买三", "3948", "244"],
            ["买四", "3947", "150"],
            ["买五", "3946", "362"],
          ]}
        />
      </div>
      <div className="border-b border-[#c4140a]">
        <table className="w-full table-fixed">
          <colgroup>
            <col className="w-[45px]" />
            <col className="w-[67px]" />
            <col className="w-[50px]" />
            <col />
          </colgroup>
          <tbody>
            {stats.map(([a, av, ac, b, bv, bc]) => (
              <tr key={a} className="h-5">
                <th scope="row" className="p-0 pl-[5px] text-left font-normal text-[#ececec]">{a}</th>
                <td className={`p-0 text-right font-bold ${ac}`}>{av}</td>
                <th scope="row" className="p-0 pl-[15px] text-left font-normal text-[#ececec]">{b}</th>
                <td className={`p-0 pr-[6px] text-right font-bold ${bc}`}>{bv}</td>
              </tr>
            ))}
          </tbody>
        </table>
      </div>
      <table className="w-full table-fixed whitespace-nowrap">
        <colgroup>
          <col className="w-[45px]" />
          <col className="w-[62px]" />
          <col className="w-[48px]" />
          <col className="w-[49px]" />
          <col />
        </colgroup>
        <thead>
          <tr className="h-[22px] text-[#808080]">
            <th className="p-0 pl-[5px] text-left font-normal">北京</th>
            <th className="p-0 text-right font-normal">价格</th>
            <th className="p-0 font-normal">
              <span className="flex items-center justify-end">
                <svg width="13" height="13" viewBox="0 0 13 13" fill="none" stroke="#808080">
                  <path d="M.5 8.500 3 12 12.500 1" />
                </svg>
                大单
              </span>
            </th>
            <th className="p-0 text-right font-normal">仓差</th>
            <th className="p-0 pl-2 text-left font-normal">性质</th>
          </tr>
        </thead>
        <tbody>
          {trades.map(([time, price, qty, delta, kind, dir], i) => (
            <tr key={i} className="h-[22px] font-bold">
              {time.startsWith(":") ? (
                <td className="p-0 pr-[7px] text-right text-[12px] font-normal text-[#ececec]">{time}</td>
              ) : (
                <td className="p-0 pl-[5px] text-[#ececec]">{time}</td>
              )}
              <td className={`p-0 text-right ${G}`}>{price}</td>
              <td className={`p-0 text-right ${dir === "g" ? G : R}`}>{qty}</td>
              <td className={`p-0 text-right ${Y}`}>{delta}</td>
              <td className={`p-0 pl-2 font-normal ${dir === "g" ? G : R}`}>{kind}</td>
            </tr>
          ))}
        </tbody>
      </table>
      <div className="mt-auto flex h-4 text-[12px] text-[#ececec]">
        <button className="h-4 w-[36px] rounded-b-[3px] border-r border-b border-[#c4140a] leading-[14px]">笔</button>
        <button className="h-4 w-[36px] border-t border-r border-[#c4140a] leading-[14px]">权</button>
        <div className="flex-1 border-t border-[#c4140a]" />
      </div>
    </aside>
  );
}

export default function App() {
  return (
    <div className="flex min-h-screen flex-col bg-black">
      <MenuBar />
      <main className="flex flex-1 border-b-2 border-[#d4d0c8]">
        <SideTabs />
        <div className="flex min-w-0 flex-1 flex-col">
          <ChartHeader />
          <PriceChart />
          <IndicatorPanels />
        </div>
        <QuotePanel />
        <div className="w-[2px] bg-[#d6d0cc]" />
      </main>
      <footer className="h-[3px] bg-linear-to-r from-[#1f3a48] to-[#1a2a4c]">
        <div className="ml-[429px] h-full w-12 bg-[#4a6370]" />
      </footer>
    </div>
  );
}
